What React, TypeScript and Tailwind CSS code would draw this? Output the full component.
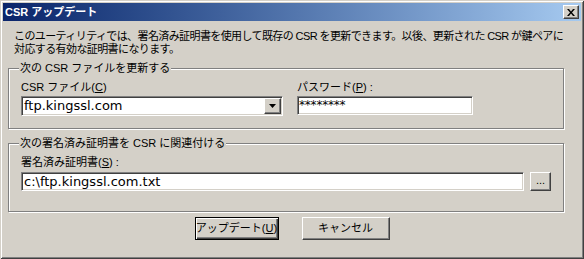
import React from "react";

const raised =
  "bg-[#d4d0c8] border border-t-white border-l-white border-b-[#404040] border-r-[#404040] shadow-[inset_-1px_-1px_0_#808080]";
const sunken =
  "bg-white border border-t-[#808080] border-l-[#808080] border-b-white border-r-white shadow-[inset_1px_1px_0_#404040,inset_-1px_-1px_0_#d4d0c8]";
const group =
  "border border-[#808080] shadow-[1px_1px_0_#fff,inset_1px_1px_0_#fff] pl-[12px] pr-[12px] pt-[6px]";
const legend = "bg-[#d4d0c8] px-[1px] -ml-[2px] leading-[13px]";

function Mn({ c }: { c: string }) {
  return (
    <>
      (<span className="underline underline-offset-1">{c}</span>)
    </>
  );
}

export default function App() {
  return (
    <div className="w-[584px] h-[259px] bg-[#d4d0c8] p-[3px] text-[11px] text-black font-['Liberation_Sans','Noto_Sans_CJK_JP',sans-serif] shadow-[inset_1px_1px_0_#d4d0c8,inset_-1px_-1px_0_#404040,inset_2px_2px_0_#fff,inset_-2px_-2px_0_#808080] overflow-hidden">
      {/* Title bar */}
      <div className="h-[18px] flex items-center justify-between bg-gradient-to-r from-[#0a246a] to-[#a6caf0] pl-[2px] pr-[2px]">
        <span className="text-white font-bold text-[11px] leading-[18px] whitespace-nowrap">
          CSR アップデート
        </span>
        <button className={`${raised} w-[16px] h-[14px] flex items-center justify-center`}>
          <svg width="8" height="7" viewBox="0 0 8 7">
            <path d="M0 0h2l2 2.5L6 0h2L5 3.5 8 7H6L4 4.5 2 7H0l3-3.5z" fill="#000" />
          </svg>
        </button>
      </div>

      {/* Description */}
      <p className="mt-[9px] ml-[11px] leading-[13px] tracking-[-0.6px] whitespace-nowrap">
        このユーティリティでは、署名済み証明書を使用して既存の CSR を更新できます。以後、更新された CSR が鍵ペアに
        <br />
        対応する有効な証明書になります。
      </p>

      {/* Group 1 */}
      <fieldset className={`${group} mt-[6px] ml-[5px] w-[556px] pb-[12px]`}>
        <legend className={legend}>次の CSR ファイルを更新する</legend>
        <div className="flex gap-[14px]">
          <div className="w-[262px]">
            <div className="leading-[13px] whitespace-nowrap">
              CSR ファイル<Mn c="C" />
            </div>
            <div className={`${sunken} mt-[2px] h-[20px] flex items-center justify-between`}>
              <span className="pl-[2px] text-[13px] font-['DejaVu_Sans',sans-serif] leading-[16px]">
                ftp.kingssl.com
              </span>
              <div className={`${raised} w-[17px] h-[16px] mr-[1px] flex items-center justify-center`}>
                <svg width="7" height="4" viewBox="0 0 7 4">
                  <polygon points="0,0 7,0 3.5,4" fill="#000" />
                </svg>
              </div>
            </div>
          </div>
          <div className="w-[176px]">
            <div className="leading-[13px] whitespace-nowrap">
              パスワード<Mn c="P" /> :
            </div>
            <div className={`${sunken} mt-[2px] h-[19px] flex items-center`}>
              <span className="pl-[1px] text-[12px] font-['DejaVu_Sans',sans-serif] leading-[15px] tracking-[-0.2px]">
                ********
              </span>
            </div>
          </div>
        </div>
      </fieldset>

      {/* Group 2 */}
      <fieldset className={`${group} mt-[8px] ml-[5px] w-[556px] pb-[20px]`}>
        <legend className={legend}>次の署名済み証明書を CSR に関連付ける</legend>
        <div className="leading-[13px] whitespace-nowrap">
          署名済み証明書<Mn c="S" /> :
        </div>
        <div className="mt-[3px] flex gap-[6px]">
          <div className={`${sunken} w-[503px] h-[19px] flex items-center`}>
            <span className="pl-[2px] text-[13px] font-['DejaVu_Sans',sans-serif] leading-[16px]">
              c:\ftp.kingssl.com.txt
            </span>
          </div>
          <button className={`${raised} w-[21px] h-[19px] flex items-center justify-center text-[11px] leading-[10px] pb-[3px]`}>
            ...
          </button>
        </div>
      </fieldset>

      {/* Buttons */}
      <div className="mt-[5px] flex justify-center gap-[23px]">
        <button className="w-[84px] h-[23px] bg-[#d4d0c8] border border-black shadow-[inset_1px_1px_0_#fff,inset_-1px_-1px_0_#404040,inset_-2px_-2px_0_#808080] flex items-center justify-center leading-[13px] whitespace-nowrap">
          アップデート<Mn c="U" />
        </button>
        <button className={`${raised} w-[88px] h-[23px] flex items-center justify-center leading-[13px]`}>
          キャンセル
        </button>
      </div>
    </div>
  );
}
